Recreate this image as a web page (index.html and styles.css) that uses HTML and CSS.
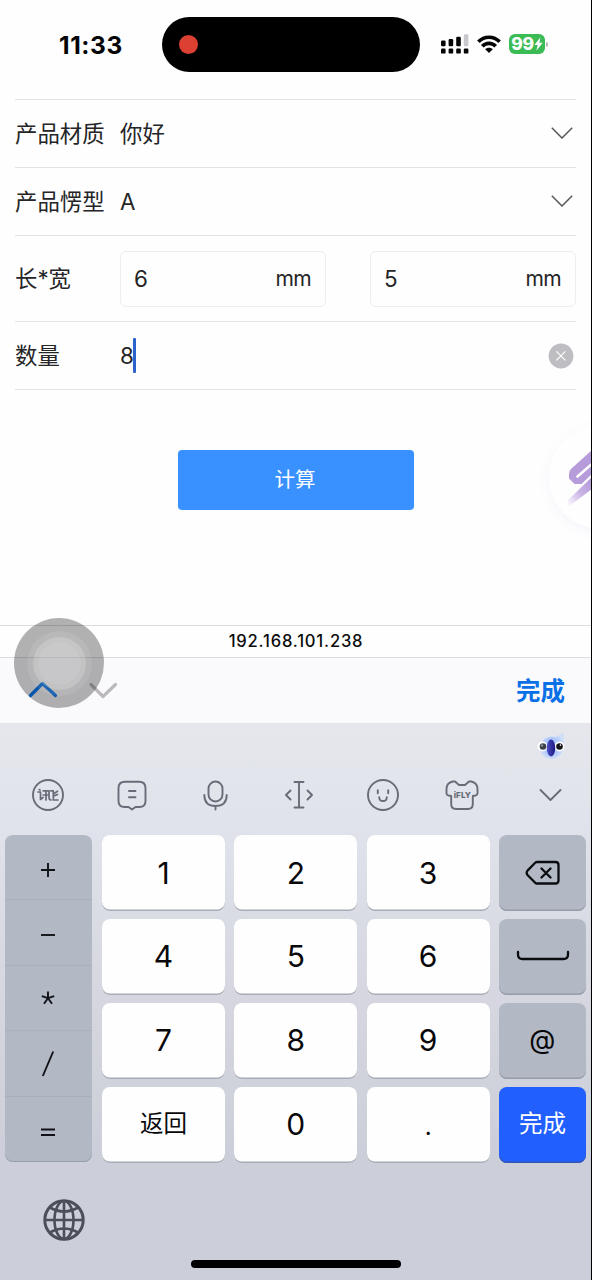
FILE: index.html
```html
<!DOCTYPE html>
<html lang="zh-CN">
<head>
<meta charset="utf-8">
<title>计算</title>
<link rel="stylesheet" href="styles.css">
</head>
<body>
<div class="phone">
  <header class="status">
    <div class="time">11:33</div>
    <div class="island"><span class="rec"></span></div>
    <div class="signals">
      <svg class="cell" width="28" height="20" viewBox="0 0 28 20">
        <g fill="#050505"><rect x="0" y="6.5" width="4.6" height="5.8" rx="1.2"/><rect x="7.6" y="5" width="4.6" height="7.3" rx="1.2"/><rect x="15.2" y="2.8" width="4.6" height="9.5" rx="1.2"/><rect x="0" y="14.6" width="4.6" height="5" rx="1.2"/><rect x="7.6" y="14.6" width="4.6" height="5" rx="1.2"/><rect x="15.2" y="14.6" width="4.6" height="5" rx="1.2"/><rect x="22.8" y="14.6" width="4.6" height="5" rx="1.2"/></g>
        <rect x="22.8" y="0.3" width="4.6" height="12" rx="1.2" fill="#cac8cc"/>
      </svg>
      <svg class="wifi" width="24" height="18" viewBox="0 0 24 18">
        <g fill="none" stroke="#050505" stroke-width="3.7"><path d="M1.4 6.8C7.2 .7 16.8 .7 22.6 6.8"/><path d="M5.3 11.3C9 7.4 15 7.4 18.7 11.3"/></g>
        <path d="M8.2 14.2C10.2 12.2 13.8 12.2 15.8 14.2L12 18Z" fill="#050505"/>
      </svg>
      <div class="battery"><span>99</span><svg width="9" height="14" viewBox="0 0 8 13"><path d="M5.8 .3L.2 7.4H3.2L2 12.7 7.9 5.3H4.9Z" fill="#fff"/></svg></div>
      <i class="nub"></i>
    </div>
  </header>

  <main class="form">
    <div class="row"><label>产品材质</label><span class="value">你好</span><svg class="chev" width="22" height="12" viewBox="0 0 22 12"><path d="M.8 .8L11 11 21.2 .8"/></svg></div>
    <div class="row"><label>产品愣型</label><span class="value">A</span><svg class="chev" width="22" height="12" viewBox="0 0 22 12"><path d="M.8 .8L11 11 21.2 .8"/></svg></div>
    <div class="row tall"><label>长*宽</label><div class="sizes"><div class="box"><span>6</span><span class="unit">mm</span></div><div class="box"><span>5</span><span class="unit">mm</span></div></div></div>
    <div class="row"><label>数量</label><span class="value">8</span><i class="caret"></i><svg class="clear" width="26" height="26" viewBox="0 0 26 26"><circle cx="13" cy="13" r="12.4" fill="#bdbdc2"/><path d="M8.4 8.4L17.4 17.4M17.4 8.4L8.4 17.4" stroke="#fff" stroke-width="1.2"/></svg></div>
  </main>
  <button class="calc">计算</button>

  <div class="bubble">
    <svg width="24" height="60" viewBox="0 0 24 60">
      <defs><linearGradient id="fade" x1="1" y1="0" x2="0" y2="1"><stop offset="0" stop-color="#b195d9"/><stop offset=".5" stop-color="#c8b3e4"/><stop offset="1" stop-color="#fff"/></linearGradient></defs>
      <path d="M24 3L3 22Q1 24 1 27V31.5L6.5 37H13.5L24 27Z" fill="#b69cda"/>
      <path d="M25 16L9.5 29.5" stroke="#fff" stroke-width="2.6" stroke-linecap="round"/>
      <path d="M24 30L0 53V60L24 42Z" fill="url(#fade)"/>
    </svg>
  </div>

  <div class="address">192.168.101.238</div>
  <div class="accessory">
    <svg width="96" height="20" viewBox="0 0 96 20"><g fill="none" stroke-width="3.2" stroke-linecap="round" stroke-linejoin="round"><path d="M4.5 15.5L16.5 3.5 29.5 15.5" stroke="#087bf5"/><path d="M65 4.5L77 16.5 89.5 4.5" stroke="#bbb9bd"/></g></svg>
    <b>完成</b>
  </div>
  <div class="assist"><i></i></div>

  <section class="keyboard">
    <div class="mascot">
      <svg width="32" height="30" viewBox="0 0 32 30">
        <defs><radialGradient id="face"><stop offset="0" stop-color="#9dbbff"/><stop offset=".6" stop-color="#afc9fc"/><stop offset="1" stop-color="#d0def8"/></radialGradient><linearGradient id="beak"><stop offset="0" stop-color="#4b4fc6"/><stop offset="1" stop-color="#20187f"/></linearGradient></defs>
        <path d="M8 8Q14 3 21 5Q25 2 29 1Q28 6 29 11Q29 25 17 27Q5 26 4 14Z" fill="url(#face)"/>
        <circle cx="7.5" cy="14.5" r="5" fill="#fff"/><circle cx="24.5" cy="14.5" r="5" fill="#fff"/>
        <circle cx="8" cy="14.5" r="3.3" fill="#3d4047"/><circle cx="24.5" cy="14.5" r="3.3" fill="#15151c"/><circle cx="7" cy="13.5" r="1.2" fill="#899095"/><circle cx="25.5" cy="13.1" r=".8" fill="#fff"/>
        <ellipse cx="16" cy="16" rx="4.2" ry="8.5" fill="url(#beak)"/>
      </svg>
    </div>
    <nav class="tools">
      <svg viewBox="0 0 40 40"><circle cx="20" cy="20" r="15"/><path d="M10 17H12.5V24.5L15 22.5M11.2 14.6L12 15M15.2 15.8H21V22Q21 25 23 25M18 15.8V25M15.2 20H20.2M22.8 15.8H25.3V25H30M25.5 19L29.5 16.2M26 21L29.5 19.5"/></svg>
      <svg viewBox="0 0 40 40"><path d="M13 6.8H27Q33.5 6.8 33.5 13.3V26Q33.5 32 27.5 32H23.5L20 34.5 16.5 32H12.5Q6.5 32 6.5 26V13.3Q6.5 6.8 13 6.8ZM17 16H23.5M17 22.3H23.5"/></svg>
      <svg viewBox="0 0 40 40"><rect x="13.5" y="6.5" width="14" height="20" rx="7"/><path d="M9.3 20Q9.3 31 20.5 31T31.7 20M20.5 31V34.5"/></svg>
      <svg viewBox="0 0 40 40"><path d="M15.5 7H24.5M20 7V32.5M15.5 32.5H24.5M11.5 15.5L7 20 11.5 24.5M28.5 15.5L33 20 28.5 24.5"/></svg>
      <svg viewBox="0 0 40 40"><circle cx="20" cy="20" r="15"/><path d="M14.8 15.2V18.2M25.2 15.2V18.2M16.2 22.2Q16.2 26 20 26T23.8 22.2"/></svg>
      <svg viewBox="0 0 40 40"><path d="M10.5 6.5H13L17 10H23L27 6.5H29.5Q35.5 8 35.5 14V18.5Q35.5 20 33.5 20.5L30.8 21V29Q30.8 34 26 34H14Q9.2 34 9.2 29V21L6.5 20.5Q4.5 20 4.5 18.5V14Q4.5 8 10.5 6.5Z"/><text x="20.3" y="22.5" class="ifly">iFLY</text></svg>
      <svg viewBox="0 0 40 40"><path d="M10.5 15L20.5 25 30.5 15"/></svg>
    </nav>

    <div class="pad">
      <div class="ops">
        <span><svg viewBox="0 0 20 20"><path d="M3 10H17M10 3V17"/></svg></span>
        <span><svg viewBox="0 0 20 20"><path d="M3 10H17"/></svg></span>
        <span><svg viewBox="0 0 20 20"><path d="M10 10.2V3.5M10 10.2L3.8 8.2M10 10.2L16.2 8.2M10 10.2L6 15.7M10 10.2L14 15.7"/></svg></span>
        <span class="slash"><svg viewBox="0 0 20 28"><path d="M4.8 26L15.2 1.5"/></svg></span>
        <span><svg viewBox="0 0 20 20"><path d="M3 7.5H17M3 13H17"/></svg></span>
      </div>
      <div class="keys">
        <div class="key">1</div><div class="key">2</div><div class="key">3</div>
        <div class="key dark"><svg width="36" height="26" viewBox="0 0 36 26"><path d="M12 2H30.5Q33.5 2 33.5 5V20.5Q33.5 23.5 30.5 23.5H12Q11 23.5 10.2 22.8L2.5 15Q.8 12.8 2.5 10.6L10.2 2.8Q11 2 12 2ZM16.5 8.5L25.5 17.5M25.5 8.5L16.5 17.5"/></svg></div>
        <div class="key">4</div><div class="key">5</div><div class="key">6</div>
        <div class="key dark space"><svg width="54" height="12" viewBox="0 0 54 12"><path d="M2 2V4.5Q2 9 6.5 9H47.5Q52 9 52 4.5V2"/></svg></div>
        <div class="key">7</div><div class="key">8</div><div class="key">9</div><div class="key dark at">@</div>
        <div class="key zh">返回</div><div class="key">0</div><div class="key dot">.</div><div class="key done">完成</div>
      </div>
    </div>

    <svg class="globe" width="42" height="42" viewBox="0 0 42 42"><g fill="none" stroke="#4b4f57" stroke-width="2.6"><circle cx="21" cy="21" r="19.2" stroke-width="3"/><ellipse cx="21" cy="21" rx="9.5" ry="19"/><path d="M21 2V40M2 21H40M7 8.5Q21 16.5 35 8.5M7 33.5Q21 25.5 35 33.5"/></g></svg>
    <div class="home"></div>
  </section>
  <i class="edge"></i>
</div>
</body>
</html>
```
FILE: styles.css
```css
* { box-sizing: border-box; }
body { margin: 0; background: #fefefe; color: #252527; font-family: Inter, "Noto Sans CJK SC", sans-serif; }
.phone { position: relative; width: 592px; height: 1280px; overflow: hidden; display: flex; flex-direction: column; }

.status { height: 99px; flex: none; display: flex; padding-top: 17px; }
.time { width: 162px; padding-left: 59px; font-size: 24.5px; line-height: 56px; font-weight: 700; color: #050505; letter-spacing: .6px; }
.island { width: 258px; height: 55px; border-radius: 28px; background: #000; padding: 18px 17px; }
.rec { display: block; width: 19px; height: 19px; border-radius: 50%; background: #dc4032; }
.signals { display: flex; align-items: center; height: 54px; padding-left: 21px; }
.wifi { margin-left: 8px; }
.battery { margin-left: 8px; width: 36px; height: 20px; border-radius: 6px; background: #3abb54; color: #fff; display: flex; align-items: center; justify-content: center; font-size: 17.5px; line-height: 20px; font-weight: 800; letter-spacing: -.4px; }
.nub { width: 2px; height: 5px; margin-left: 1px; background: #b5b5b5; border-radius: 0 2px 2px 0; }

.form { margin: 0 16px 0 15px; flex: none; border-top: 1px solid #e3e2e6; font-size: 22.4px; }
.row { display: flex; align-items: center; height: 68px; border-bottom: 1px solid #e3e2e6; }
.row.tall { height: 86px; }
.row label { width: 105px; white-space: nowrap; line-height: 32px; }
.value { line-height: 32px; }
.chev { margin: 0 3px 2px auto; fill: none; stroke: #57575a; stroke-width: 1.5; }
.sizes { display: grid; grid-template-columns: 206px 206px; gap: 44px; }
.box { height: 56px; border: 1px solid #ededf0; border-radius: 6px; padding: 0 14px 0 13px; display: flex; justify-content: space-between; align-items: center; }
.unit { font-size: 21px; letter-spacing: -.6px; }
.caret { width: 3px; height: 35px; margin-left: -1px; background: #2b62cb; border-radius: 1px; }
.clear { margin-left: auto; margin-right: 2px; }
.calc { flex: none; width: 236px; height: 60px; margin: 60px 0 0 178px; border: 0; border-radius: 4px; background: #3991ff; color: #fff; font: 400 20.5px/58px Inter, "Noto Sans CJK SC", sans-serif; padding: 0 2px 0 0; }

.bubble { position: absolute; left: 549px; top: 425px; width: 104px; height: 104px; border-radius: 50%; background: #fefefe; box-shadow: 0 3px 12px #9a70c814; padding: 22px 0 0 19px; }

.address { margin-top: 115px; height: 33px; flex: none; border: solid #dcdbde; border-width: 1px 0; text-align: center; font-size: 16.6px; line-height: 30px; font-weight: 550; color: #0b0b0b; letter-spacing: .8px; }
.accessory { height: 65px; flex: none; background: #faf9fc; display: flex; align-items: center; justify-content: space-between; padding: 0 27px 0 26px; }
.accessory svg { margin-bottom: 2px; }
.accessory b { font-size: 24.5px; line-height: 36px; color: #0a70e7; }
.assist { position: absolute; left: 14px; top: 618px; width: 90px; height: 90px; border-radius: 50%; background: #0000004d; display: flex; align-items: center; justify-content: center; }
.assist i { width: 43px; height: 43px; border-radius: 50%; background: #ffffff50; box-shadow: 0 0 0 5px #ffffff30, 0 0 0 11px #ffffff18; }

.keyboard { flex: 1; display: flex; flex-direction: column; background: linear-gradient(#e6e7ed 0, #e0e3eb 100px, #d5d6df 280px, #cccfd9 430px); }
.mascot { height: 42px; padding: 9px 0 0 535px; }
.tools { height: 60px; display: flex; align-items: center; padding-left: 28px; }
.tools svg { width: 40px; height: 40px; margin-right: 43.7px; fill: none; stroke: #686c77; stroke-width: 1.9; stroke-linejoin: round; stroke-linecap: round; }
.tools svg:nth-child(5) { margin-right: 39px; }
.tools svg:nth-child(6) { margin-right: 48px; }
.tools svg:nth-child(7) { margin-right: 0; }
.tools svg:nth-child(1) path { stroke-width: 1.7; }
.tools .ifly { fill: #686c77; stroke: none; font-size: 8.2px; font-weight: 800; text-anchor: middle; }

.pad { display: flex; gap: 10px; padding: 10px 6px 0 5px; height: 337px; color: #08080a; }
.ops { width: 87px; display: grid; grid-template-rows: repeat(5, 1fr); border-radius: 8px; background: #b2b9c5; box-shadow: inset 0 -1px #969da9; }
.ops span { display: flex; justify-content: center; align-items: center; padding: 5px 1px 0 0; border-bottom: 1px solid #a8b0bd; }
.ops span:nth-child(3) { padding: 0 1px 0 0; }
.ops span:last-child { border: 0; }
.ops svg { width: 20px; height: 20px; fill: none; stroke: #111217; stroke-width: 1.9; }
.ops .slash { padding-top: 2px; }
.ops .slash svg { height: 28px; }
.keys { display: grid; grid-template: repeat(4, 76px) / 123px 123px 123px 87px; column-gap: 9.3px; row-gap: 7.9px; }
.key { border-radius: 8px; background: #fefefe; box-shadow: inset 0 -1.5px #a7abb5; display: flex; align-items: center; justify-content: center; font-size: 30px; font-weight: 380; line-height: 74px; padding-bottom: 1px; }
.key svg { fill: none; stroke: #0b0c10; stroke-width: 2.3; stroke-linecap: round; stroke-linejoin: round; margin-left: 1px; }
.dark { background: #b2b9c5; box-shadow: inset 0 -1.5px #969da9; }
.at { font-size: 27px; padding-bottom: 2px; }
.dot { font-size: 24px; padding-top: 6px; }
.zh, .done { font-size: 23.5px; font-weight: 400; padding-bottom: 1px; }
.done { background: #225fff; color: #fff; box-shadow: inset 0 -1.5px #3456b4; }
.globe { flex: none; margin: 37px 0 0 43px; }
.home { flex: none; width: 210px; height: 8px; border-radius: 4px; background: #000; margin: 19px 0 0 191px; }
.edge { position: absolute; right: 0; top: 0; width: 1px; height: 1280px; background: #000; }
```
